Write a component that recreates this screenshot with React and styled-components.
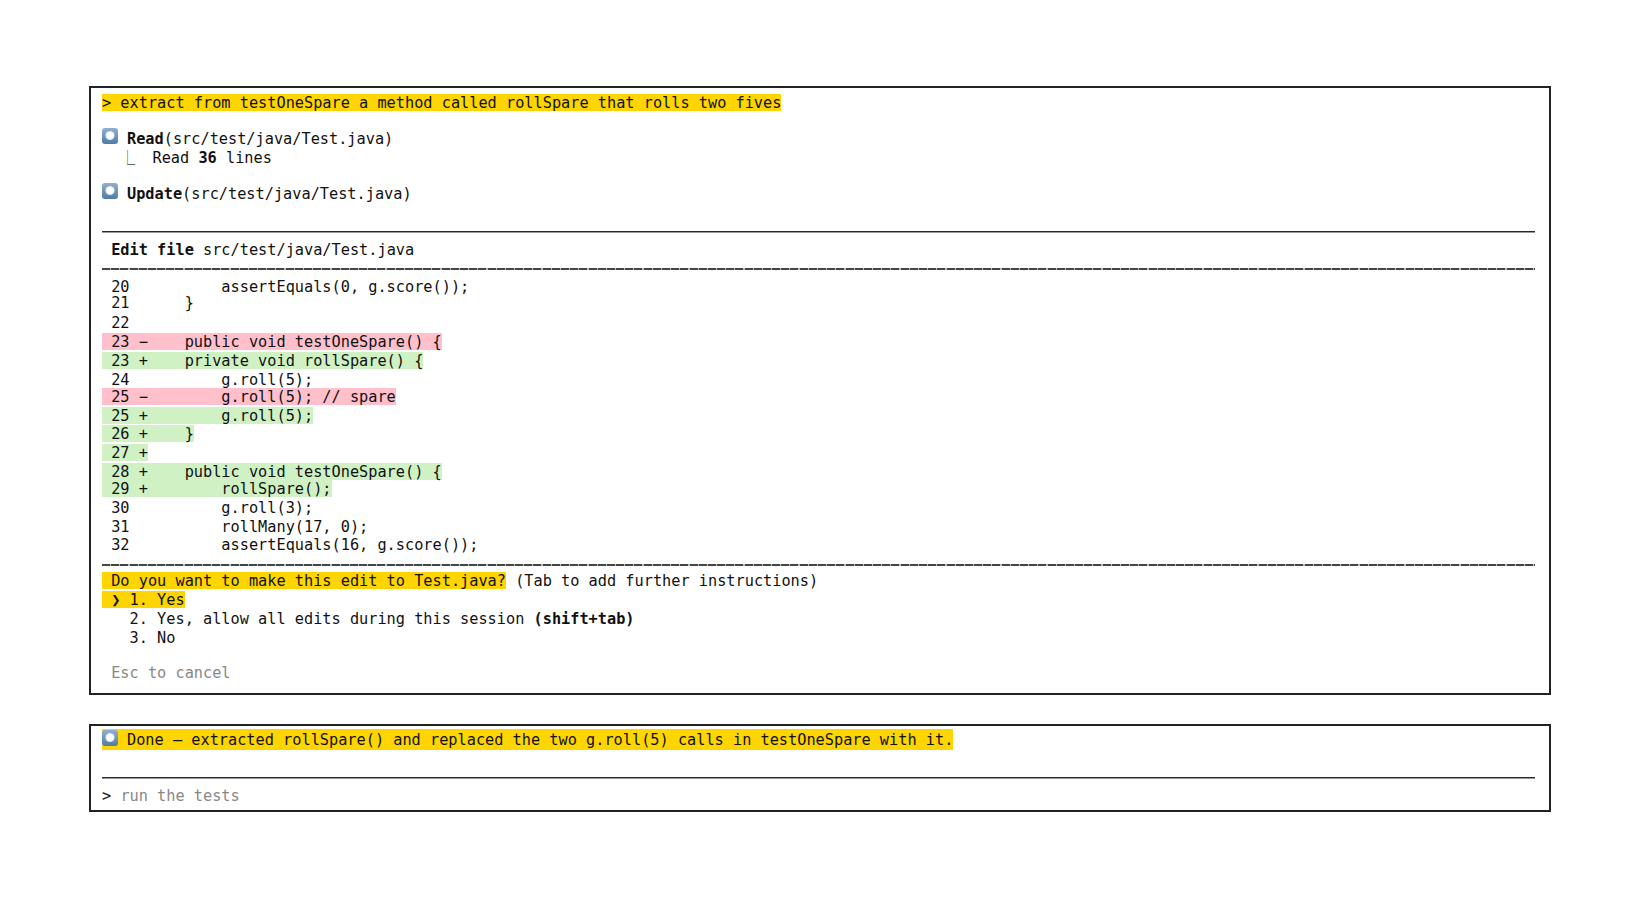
import React from "react"
import styled, { createGlobalStyle } from "styled-components"

const GlobalStyle = createGlobalStyle`
  html, body {
    margin: 0;
    padding: 0;
    background: #fff;
  }
`

const Page = styled.div`
  box-sizing: border-box;
  width: 1640px;
  height: 922px;
  padding: 86px 89px 0 89px;
  font-family: "DejaVu Sans Mono", monospace;
  font-size: 15.25px;
  color: #111;
`

const Terminal = styled.section`
  box-sizing: border-box;
  height: ${(p) => p.$height}px;
  margin-bottom: 29px;
  padding: ${(p) => p.$top}px 14px 0 11px;
  border: 2px solid #222;
`

const Line = styled.div`
  display: flex;
  align-items: flex-start;
  height: ${(p) => p.$h || 19}px;
  margin-top: ${(p) => p.$gap || 0}px;
  white-space: pre;
  line-height: ${(p) => p.$lead || 19}px;
`

const Mark = styled.span`
  display: inline-block;
  height: ${(p) => p.$tall || 17}px;
  background: ${(p) => p.$bg};
`

const BulletBand = styled(Mark)`
  display: inline-flex;
`

const Muted = styled.span`
  color: #888;
`

const Bold = styled.b`
  font-weight: 700;
`

const Rule = styled.div`
  height: 2px;
  margin-top: ${(p) => p.$gap || 0}px;
  margin-bottom: ${(p) => p.$after || 0}px;
  background: ${(p) =>
    p.$dashed
      ? "repeating-linear-gradient(90deg, #444 0 8px, #bbb 8px 9.18px)"
      : "linear-gradient(#2a2a2a 50%, #999 50%)"};
`

const Glyph = styled.svg`
  flex: none;
  width: 16px;
  height: 16px;
  margin-right: 9px;
  margin-top: ${(p) => p.$top}px;
`

const Corner = styled.span`
  display: inline-block;
  width: 50.5px;
  color: #666;
`

const Bullet = ({ top = -2 }) => (
  <Glyph viewBox="0 0 16 16" $top={top}>
    <defs>
      <linearGradient id="bulletFill" x1="0" y1="0" x2="0" y2="1">
        <stop offset="0" stopColor="#92b0cf" />
        <stop offset="1" stopColor="#4f7ba6" />
      </linearGradient>
      <radialGradient id="bulletDot">
        <stop offset="0.65" stopColor="#fff" />
        <stop offset="1" stopColor="#d5e2ef" />
      </radialGradient>
    </defs>
    <rect width="16" height="16" rx="3" fill="url(#bulletFill)" />
    <circle cx="8" cy="7.5" r="4.6" fill="url(#bulletDot)" />
  </Glyph>
)

const PINK = "#ffc0cb"
const GREEN = "#cff1c4"
const YELLOW = "#ffd500"

const diffRows = [
  { text: " 20          assertEquals(0, g.score());", h: 16 },
  { text: " 21      }", h: 20 },
  { text: " 22", h: 19 },
  { text: " 23 −    public void testOneSpare() {", bg: PINK, h: 19 },
  { text: " 23 +    private void rollSpare() {", bg: GREEN, h: 19 },
  { text: " 24          g.roll(5);", h: 17 },
  { text: " 25 −        g.roll(5); // spare", bg: PINK, h: 19 },
  { text: " 25 +        g.roll(5);", bg: GREEN, h: 18 },
  { text: " 26 +    }", bg: GREEN, h: 19 },
  { text: " 27 +", bg: GREEN, h: 19 },
  { text: " 28 +    public void testOneSpare() {", bg: GREEN, h: 17 },
  { text: " 29 +        rollSpare();", bg: GREEN, h: 19 },
  { text: " 30          g.roll(3);", h: 19 },
  { text: " 31          rollMany(17, 0);", h: 18 },
  { text: " 32          assertEquals(16, g.score());", h: 19 },
]

const App = () => (
  <>
    <GlobalStyle />
    <Page>
      <Terminal $height={609} $top={6}>
        <Line>
          <Mark $bg={YELLOW}>{"> extract from testOneSpare a method called rollSpare that rolls two fives"}</Mark>
        </Line>
        <Line $gap={17}>
          <Bullet />
          <span><Bold>Read</Bold>(src/test/java/Test.java)</span>
        </Line>
        <Line>
          <Corner>{"  ⎿"}</Corner>
          <span>Read <Bold>36</Bold> lines</span>
        </Line>
        <Line $gap={17}>
          <Bullet />
          <span><Bold>Update</Bold>(src/test/java/Test.java)</span>
        </Line>
        <Rule $gap={27} />
        <Line $gap={8} $h={27}>
          <span> <Bold>Edit file</Bold> src/test/java/Test.java</span>
        </Line>
        <Rule $dashed $after={8} />
        {diffRows.map((row) => (
          <Line key={row.text} $h={row.h}>
            {row.bg ? <Mark $bg={row.bg}>{row.text}</Mark> : row.text}
          </Line>
        ))}
        <Rule $dashed $gap={9} $after={6} />
        <Line>
          <Mark $bg={YELLOW}> Do you want to make this edit to Test.java?</Mark>
          <span> (Tab to add further instructions)</span>
        </Line>
        <Line>
          <Mark $bg={YELLOW}> <Bold>❯</Bold> 1. Yes</Mark>
        </Line>
        <Line>
          <span>   2. Yes, allow all edits during this session <Bold>(shift+tab)</Bold></span>
        </Line>
        <Line>{"   3. No"}</Line>
        <Line $gap={16}>
          <Muted> Esc to cancel</Muted>
        </Line>
      </Terminal>
      <Terminal $height={88} $top={3}>
        <Line $h={21} $lead={23}>
          <BulletBand $bg={YELLOW} $tall={21}>
            <Bullet top={1} />
            <span>Done — extracted rollSpare() and replaced the two g.roll(5) calls in testOneSpare with it.</span>
          </BulletBand>
        </Line>
        <Rule $gap={27} />
        <Line $gap={8}>
          <span>{"> "}<Muted>run the tests</Muted></span>
        </Line>
      </Terminal>
    </Page>
  </>
)

export default App
